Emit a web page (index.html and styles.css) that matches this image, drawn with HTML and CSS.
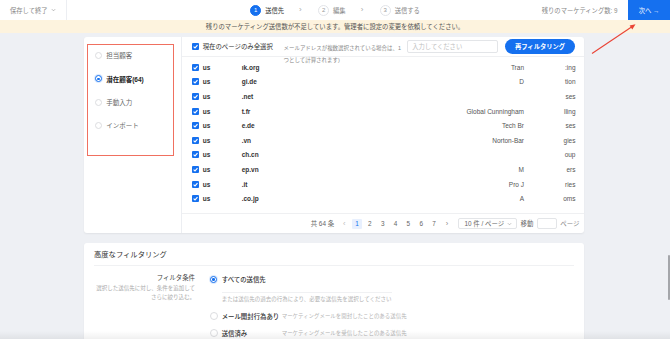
FILE: index.html
```html
<!DOCTYPE html>
<html lang="ja">
<head>
<meta charset="utf-8">
<link rel="stylesheet" href="styles.css">
</head>
<body>
<header class="topbar">
  <div class="save">保存して終了 <svg class="caret" viewBox="0 0 6 4" width="5" height="4"><path d="M1 1 L3 3 L5 1" fill="none" stroke="#999" stroke-width="0.8"/></svg></div>
  <nav class="steps">
    <div class="step active"><span class="num">1</span><span>送信先</span></div>
    <span class="chev">›</span>
    <div class="step"><span class="num">2</span><span>編集</span></div>
    <span class="chev">›</span>
    <div class="step"><span class="num">3</span><span>送信する</span></div>
  </nav>
  <div class="right">
    <span class="remain">残りのマーケティング数: 9</span>
    <button class="next">次へ →</button>
  </div>
</header>
<div class="banner">残りのマーケティング送信数が不足しています。管理者に設定の変更を依頼してください。</div>

<main class="main">
  <section class="card list-card">
    <aside class="side">
      <div class="redbox">
        <div class="ropt"><span class="radio"></span><span>担当顧客</span></div>
        <div class="ropt sel"><span class="radio on"></span><span>潜在顧客(64)</span></div>
        <div class="ropt"><span class="radio"></span><span>手動入力</span></div>
        <div class="ropt"><span class="radio"></span><span>インポート</span></div>
      </div>
    </aside>
    <div class="list">
      <div class="list-head">
        <span class="cb"><svg viewBox="0 0 7 7"><path d="M1.6 3.6 L3 4.9 L5.5 2.1" fill="none" stroke="#fff" stroke-width="1.1"/></svg></span>
        <span class="head-label">現在のページのみ全選択</span>
        <span class="note">メールアドレスが複数選択されている場合は、1<br>つとして計算されます)</span>
        <span class="search">入力してください</span>
        <button class="refilter">再フィルタリング</button>
      </div>
      <div class="rows">
        <div class="row"><span class="cb"><svg viewBox="0 0 7 7"><path d="M1.6 3.6 L3 4.9 L5.5 2.1" fill="none" stroke="#fff" stroke-width="1.1"/></svg></span><span class="u">us</span><span class="em">ık.org</span><span class="co">Tran</span><span class="ind">:ing</span></div>
        <div class="row"><span class="cb"><svg viewBox="0 0 7 7"><path d="M1.6 3.6 L3 4.9 L5.5 2.1" fill="none" stroke="#fff" stroke-width="1.1"/></svg></span><span class="u">us</span><span class="em">gi.de</span><span class="co">D</span><span class="ind">tion</span></div>
        <div class="row"><span class="cb"><svg viewBox="0 0 7 7"><path d="M1.6 3.6 L3 4.9 L5.5 2.1" fill="none" stroke="#fff" stroke-width="1.1"/></svg></span><span class="u">us</span><span class="em">.net</span><span class="co"></span><span class="ind">ses</span></div>
        <div class="row"><span class="cb"><svg viewBox="0 0 7 7"><path d="M1.6 3.6 L3 4.9 L5.5 2.1" fill="none" stroke="#fff" stroke-width="1.1"/></svg></span><span class="u">us</span><span class="em">t.fr</span><span class="co">Global Cunningham</span><span class="ind">lling</span></div>
        <div class="row"><span class="cb"><svg viewBox="0 0 7 7"><path d="M1.6 3.6 L3 4.9 L5.5 2.1" fill="none" stroke="#fff" stroke-width="1.1"/></svg></span><span class="u">us</span><span class="em">e.de</span><span class="co">Tech Br</span><span class="ind">ses</span></div>
        <div class="row"><span class="cb"><svg viewBox="0 0 7 7"><path d="M1.6 3.6 L3 4.9 L5.5 2.1" fill="none" stroke="#fff" stroke-width="1.1"/></svg></span><span class="u">us</span><span class="em">.vn</span><span class="co">Norton-Bar</span><span class="ind">gies</span></div>
        <div class="row"><span class="cb"><svg viewBox="0 0 7 7"><path d="M1.6 3.6 L3 4.9 L5.5 2.1" fill="none" stroke="#fff" stroke-width="1.1"/></svg></span><span class="u">us</span><span class="em">ch.cn</span><span class="co"></span><span class="ind">oup</span></div>
        <div class="row"><span class="cb"><svg viewBox="0 0 7 7"><path d="M1.6 3.6 L3 4.9 L5.5 2.1" fill="none" stroke="#fff" stroke-width="1.1"/></svg></span><span class="u">us</span><span class="em">ep.vn</span><span class="co">M</span><span class="ind">ers</span></div>
        <div class="row"><span class="cb"><svg viewBox="0 0 7 7"><path d="M1.6 3.6 L3 4.9 L5.5 2.1" fill="none" stroke="#fff" stroke-width="1.1"/></svg></span><span class="u">us</span><span class="em">.it</span><span class="co">Pro J</span><span class="ind">ries</span></div>
        <div class="row"><span class="cb"><svg viewBox="0 0 7 7"><path d="M1.6 3.6 L3 4.9 L5.5 2.1" fill="none" stroke="#fff" stroke-width="1.1"/></svg></span><span class="u">us</span><span class="em">.co.jp</span><span class="co">A</span><span class="ind">oms</span></div>
      </div>
      <div class="pager">
        <span class="total">共 64 条</span>
        <div class="pages">
          <span class="pg dim">‹</span>
          <span class="pg cur">1</span>
          <span class="pg">2</span>
          <span class="pg">3</span>
          <span class="pg">4</span>
          <span class="pg">5</span>
          <span class="pg">6</span>
          <span class="pg">7</span>
          <span class="pg">›</span>
        </div>
        <span class="size">10 件 / ページ <svg viewBox="0 0 6 4" width="5" height="4"><path d="M1 1 L3 3 L5 1" fill="none" stroke="#999" stroke-width="0.7"/></svg></span>
        <span class="jump">移動</span>
        <span class="jump-box"></span>
        <span class="jump-unit">ページ</span>
      </div>
    </div>
  </section>

  <section class="card filter-card">
    <div class="filter-title">高度なフィルタリング</div>
    <div class="filter-body">
      <div class="fl">
        <div class="fl-name">フィルタ条件</div>
        <div class="fl-help">選択した送信先に対し、条件を追加して<br>さらに絞り込む。</div>
      </div>
      <div class="options">
        <div class="opt first"><span class="radio on"></span><span class="opt-name">すべての送信先</span></div>
        <div class="opt-note">または送信先の過去の行為により、必要な送信先を選択してください</div>
        <div class="opt second"><span class="radio big"></span><span class="opt-name">メール開封行為あり</span><span class="opt-desc">マーケティングメールを開封したことのある送信先</span></div>
        <div class="opt third"><span class="radio big"></span><span class="opt-name">送信済み</span><span class="opt-desc">マーケティングメールを受信したことのある送信先</span></div>
      </div>
    </div>
  </section>
</main>

<div class="scrollthumb"></div>
<div class="bottom-shade"></div>
<svg class="annot" width="670" height="339" viewBox="0 0 670 339">
  <line x1="592" y1="53.5" x2="633" y2="26" stroke="#ea4335" stroke-width="1.1"/>
  <path d="M635.5 24.3 L629.6 25.6 L632.3 29.6 Z" fill="#ea4335"/>
</svg>
</body>
</html>
```

FILE: styles.css
```css
* { box-sizing: border-box; margin: 0; padding: 0; }

body {
  width: 670px;
  height: 339px;
  overflow: hidden;
  position: relative;
  background: #eef0f4;
  font-family: "Liberation Sans", "Noto Sans CJK JP", sans-serif;
  color: #333;
  font-size: 6.4px;
}

button { font-family: inherit; border: none; cursor: pointer; }

/* ---------- top bar ---------- */
.topbar {
  height: 20px;
  background: #fff;
  display: grid;
  grid-template-columns: 1fr auto 1fr;
  align-items: center;
  font-size: 6.3px;
  color: #888;
}
.save {
  width: 67px;
  height: 20px;
  border-right: 1px solid #eceef2;
  display: flex;
  align-items: center;
  gap: 3px;
  padding-left: 10px;
}
.steps {
  display: flex;
  align-items: center;
  gap: 15px;
}
.step {
  display: flex;
  align-items: center;
  gap: 4px;
  color: #888;
}
.step.active { color: #333; }
.num {
  width: 11px;
  height: 11px;
  border-radius: 50%;
  border: 1px solid #e2e4e8;
  display: flex;
  align-items: center;
  justify-content: center;
  font-size: 6px;
  color: #999;
}
.step.active .num {
  background: #1570ef;
  border-color: #1570ef;
  color: #fff;
}
.chev { color: #aaa; font-size: 8px; width: 4px; line-height: 1; }
.right {
  display: flex;
  align-items: center;
  justify-content: flex-end;
  gap: 10.5px;
  height: 20px;
}
.remain { color: #888; }
.next {
  width: 42px;
  height: 20px;
  background: #1570ef;
  color: #fff;
  font-size: 6.3px;
}

.banner {
  height: 13px;
  line-height: 13px;
  background: #fdf3de;
  text-align: center;
  font-size: 6.35px;
  color: #555;
}

/* ---------- main ---------- */
.main { padding: 4px 0 0 84px; }

.card {
  width: 500px;
  background: #fff;
  border-radius: 3px;
  box-shadow: 0 1px 2px rgba(0, 0, 0, 0.06);
}

.list-card {
  height: 196px;
  display: flex;
}

.side {
  width: 98px;
  border-right: 1px solid #eceef2;
  padding: 7.3px 0 0 3.3px;
  flex: none;
}
.redbox {
  width: 87px;
  height: 111.4px;
  border: 1.5px solid #f07060;
  padding: 4.2px 0 0 6.7px;
  display: flex;
  flex-direction: column;
  gap: 11.3px;
}
.ropt {
  height: 12px;
  display: flex;
  align-items: center;
  gap: 4.2px;
  color: #666;
  font-size: 6.5px;
}
.ropt.sel { color: #222; font-weight: 700; }

.radio {
  width: 7px;
  height: 7px;
  border-radius: 50%;
  border: 1px solid #dcdde0;
  background: #fff;
  flex: none;
  position: relative;
}
.radio.on {
  border-color: #1570ef;
  box-shadow: 0 0 0 1px rgba(21, 112, 239, 0.15);
}
.radio.on::after {
  content: "";
  position: absolute;
  left: 1.25px;
  top: 1.25px;
  width: 2.5px;
  height: 2.5px;
  border-radius: 50%;
  background: #1570ef;
}
.radio.big { width: 8px; height: 8px; }

/* ---------- list ---------- */
.list {
  flex: 1;
  display: flex;
  flex-direction: column;
  min-width: 0;
}
.list-head {
  height: 20px;
  flex: none;
  border-bottom: 1px solid #eff0f2;
  display: flex;
  align-items: center;
  padding: 0 9px 0 10px;
  position: relative;
}
.cb {
  width: 7px;
  height: 7px;
  border-radius: 1px;
  background: #1570ef;
  flex: none;
  display: block;
}
.cb svg { width: 7px; height: 7px; display: block; }
.head-label {
  margin-left: 3.7px;
  color: #333;
  white-space: nowrap;
}
.note {
  margin-left: 10.7px;
  align-self: flex-start;
  margin-top: 5px;
  font-size: 5.46px;
  line-height: 12.4px;
  color: #888;
  white-space: nowrap;
  height: 12.4px;
  overflow: visible;
  flex: none;
}
.search {
  margin-left: auto;
  width: 91.6px;
  height: 12.7px;
  border: 1px solid #e3e5e8;
  border-radius: 2px;
  color: #c0c0c0;
  font-size: 6.3px;
  display: flex;
  align-items: center;
  padding-left: 4.5px;
  flex: none;
}
.refilter {
  margin-left: 6.7px;
  width: 70px;
  height: 14.7px;
  border-radius: 8px;
  background: #1570ef;
  color: #fff;
  font-weight: 700;
  font-size: 6.3px;
  flex: none;
}

.rows { padding-top: 3px; }
.row {
  height: 14.6px;
  display: grid;
  grid-template-columns: 7px 42.7px 1fr auto 51.5px;
  align-items: center;
  padding: 0 8.5px 0 10px;
  font-size: 6.5px;
}
.row .u { margin-left: 3.7px; font-weight: 700; color: #333; }
.row .em { font-weight: 700; color: #333; }
.row .co { color: #555; text-align: right; }
.row .ind { color: #555; text-align: right; }

.pager {
  margin-top: auto;
  height: 20px;
  border-top: 1px solid #eff0f2;
  display: flex;
  align-items: center;
  justify-content: flex-end;
  padding-right: 4.7px;
  color: #666;
  font-size: 6.4px;
}
.pages {
  display: flex;
  gap: 2.85px;
  margin-left: 5px;
}
.pg {
  width: 10px;
  height: 10px;
  display: flex;
  align-items: center;
  justify-content: center;
  color: #666;
}
.pg.dim { color: #bbb; font-size: 7.5px; }
.pg:last-child { font-size: 7.5px; color: #888; }
.pg.cur { background: #e8f0fe; color: #1570ef; border-radius: 1px; }
.size {
  margin-left: 6px;
  width: 59px;
  height: 11px;
  border: 1px solid #e3e5e8;
  border-radius: 2px;
  display: flex;
  align-items: center;
  gap: 3px;
  padding-left: 5.5px;
  white-space: nowrap;
}
.jump { margin-left: 3.6px; }
.jump-box {
  margin-left: 3.7px;
  width: 20px;
  height: 11px;
  border: 1px solid #e3e5e8;
  border-radius: 2px;
}
.jump-unit { margin-left: 3.3px; color: #888; }

/* ---------- advanced filter ---------- */
.filter-card {
  margin-top: 10px;
  height: 110px;
}
.filter-title {
  margin: 0 10px;
  padding: 6px 0 3.5px;
  line-height: 12px;
  font-size: 7.3px;
  color: #333;
  border-bottom: 1px solid #f0f1f3;
}
.filter-body {
  display: flex;
  padding: 7.8px 0 0 10px;
}
.fl {
  width: 101px;
  text-align: right;
  flex: none;
}
.fl-name {
  line-height: 10px;
  font-size: 6.4px;
  color: #444;
}
.fl-help {
  margin-top: 0.5px;
  line-height: 9px;
  font-size: 5.5px;
  color: #aaa;
  white-space: nowrap;
}
.options {
  margin-left: 15px;
  display: flex;
  flex-direction: column;
}
.opt {
  height: 12px;
  display: flex;
  align-items: center;
  font-size: 6.4px;
}
.opt .radio { margin-right: 4.7px; }
.opt .radio.big { margin-right: 3.7px; }
.opt-name {
  width: 60px;
  white-space: nowrap;
  font-weight: 500;
  color: #333;
}
.opt.first { margin-top: 0; }
.opt-note {
  margin: 7px 0 0 11.7px;
  width: 170px;
  border-top: 1px solid #f0f1f3;
  padding-top: 1.6px;
  line-height: 9px;
  font-size: 5.5px;
  color: #b0b0b0;
  white-space: nowrap;
}
.opt.second { margin-top: 6.2px; }
.opt.third { margin-top: 5.3px; }
.opt-desc {
  font-size: 5.46px;
  color: #b5b5b5;
  white-space: nowrap;
}

/* ---------- overlays ---------- */
.scrollthumb {
  position: absolute;
  left: 667.5px;
  top: 255px;
  width: 2px;
  height: 45px;
  border-radius: 1px;
  background: #a4a6aa;
}
.bottom-shade {
  position: absolute;
  left: 0;
  right: 0;
  bottom: 0;
  height: 8px;
  background: linear-gradient(to bottom, rgba(0,0,0,0), rgba(0,0,0,0.06));
  pointer-events: none;
}
.annot {
  position: absolute;
  left: 0;
  top: 0;
  pointer-events: none;
}
```
